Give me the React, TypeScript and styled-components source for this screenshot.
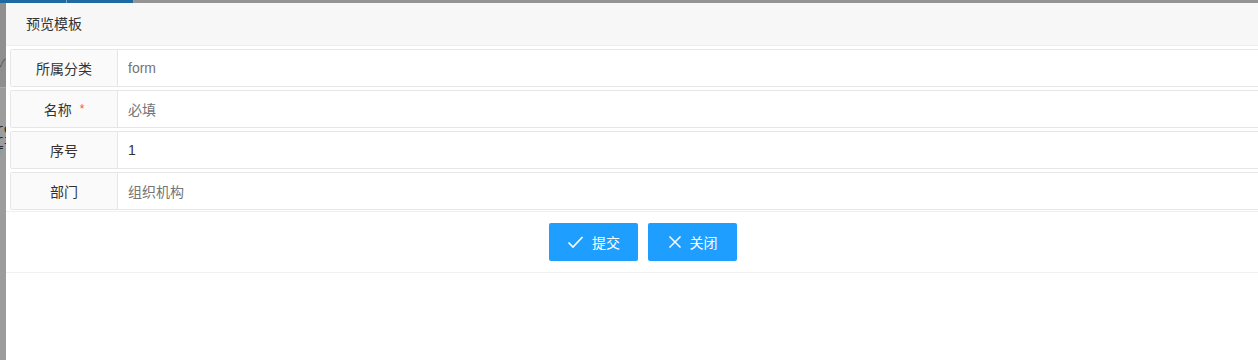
import React from "react";
import styled, { createGlobalStyle } from "styled-components";

const Global = createGlobalStyle`
  html, body { margin: 0; padding: 0; background: #fff; overflow: hidden; }
  body { font-family: "Helvetica Neue", "Liberation Sans", "Noto Sans CJK SC", sans-serif; font-size: 14px; color: #333; }
  * { box-sizing: border-box; }
`;

const Page = styled.div`
  width: 1258px;
  height: 360px;
  overflow: hidden;
  display: flex;
  flex-direction: column;
`;

const TopStrip = styled.div`
  height: 3px;
  display: flex;
  background: #949494;
  flex-shrink: 0;
`;

const TopTab = styled.div<{ $w: number }>`
  width: ${(p) => p.$w}px;
  background: #1f69a3;
  border-right: 1px solid #7aa3c4;
`;

const Main = styled.div`
  flex: 1;
  display: flex;
  min-height: 0;
`;

const SideStrip = styled.div`
  width: 6px;
  flex-shrink: 0;
  display: flex;
  flex-direction: column;
  background: #9c9c9c;
  overflow: hidden;
`;

const SideTop = styled.div`
  height: 85px;
  background: #8f8f8f;
  border-bottom: 1px solid #a8a8a8;
  padding-top: 54px;
  margin-left: -2px;
  color: #555;
  font-size: 11px;
  line-height: 12px;
`;

const SideText = styled.div`
  padding-top: 36px;
  margin-left: -4px;
  font-family: "Liberation Mono", monospace;
  font-size: 13px;
  line-height: 11px;
  color: #222;
  white-space: pre;
`;

const Dialog = styled.div`
  width: 1274px;
  flex-shrink: 0;
  background: #fff;
  display: flex;
  flex-direction: column;
`;

const Title = styled.div`
  height: 43px;
  line-height: 42px;
  padding: 0 80px 0 20px;
  background: #f7f7f7;
  border-bottom: 1px solid #eee;
  font-size: 14px;
  color: #333;
`;

const Body = styled.div`
  padding: 3px 0 0 4px;
  display: flex;
  flex-direction: column;
  gap: 3px;
`;

const Row = styled.div`
  display: flex;
  height: 38px;
  border: 1px solid #e6e6e6;
  border-radius: 2px;
`;

const Label = styled.div`
  width: 107px;
  flex-shrink: 0;
  background: #fafafa;
  border-right: 1px solid #e6e6e6;
  display: flex;
  align-items: center;
  justify-content: center;
  font-size: 14px;
  color: #333;
`;

const Required = styled.span`
  color: #ff5722;
  margin-left: 8px;
  font-size: 12px;
  position: relative;
  top: 0;
`;

const Value = styled.div<{ $muted?: boolean }>`
  flex: 1;
  display: flex;
  align-items: center;
  padding-left: 10px;
  font-size: 14px;
  color: ${(p) => (p.$muted ? "#757575" : "#333")};
`;

const Footer = styled.div`
  margin-top: 1px;
  border-top: 1px solid #f0f0f0;
  border-bottom: 1px solid #f0f0f0;
  padding: 11px 0 11px;
  display: flex;
  justify-content: center;
  gap: 10px;
`;

const Button = styled.button`
  width: 89px;
  height: 38px;
  border: none;
  border-radius: 2px;
  background: #1e9fff;
  color: #fff;
  font-family: inherit;
  font-size: 14px;
  display: flex;
  align-items: center;
  justify-content: center;
  gap: 8px;
  padding: 0;
  cursor: pointer;
`;

const Check = () => (
  <svg width="17" height="14" viewBox="0 0 17 14" fill="none">
    <path d="M1.5 7.5 L6 12 L15.5 2" stroke="#fff" strokeWidth="1.6" />
  </svg>
);

const Cross = () => (
  <svg width="14" height="14" viewBox="0 0 14 14" fill="none">
    <path d="M1.5 1.5 L12.5 12.5 M12.5 1.5 L1.5 12.5" stroke="#fff" strokeWidth="1.5" />
  </svg>
);

const rows: { label: string; value: string; muted: boolean; req?: boolean }[] = [
  { label: "所属分类", value: "form", muted: true },
  { label: "名称", value: "必填", muted: true, req: true },
  { label: "序号", value: "1", muted: false },
  { label: "部门", value: "组织机构", muted: true },
];

export default function App() {
  return (
    <Page>
      <Global />
      <TopStrip>
        <TopTab $w={67} />
        <TopTab $w={67} />
      </TopStrip>
      <Main>
        <SideStrip>
          <SideTop>✓</SideTop>
          <SideText>{"rc\nrı\nf"}</SideText>
        </SideStrip>
        <Dialog>
          <Title>预览模板</Title>
          <Body>
            {rows.map((r) => (
              <Row key={r.label}>
                <Label>
                  {r.label}
                  {r.req && <Required>*</Required>}
                </Label>
                <Value $muted={r.muted}>{r.value}</Value>
              </Row>
            ))}
          </Body>
          <Footer>
            <Button>
              <Check />
              提交
            </Button>
            <Button>
              <Cross />
              关闭
            </Button>
          </Footer>
        </Dialog>
      </Main>
    </Page>
  );
}
